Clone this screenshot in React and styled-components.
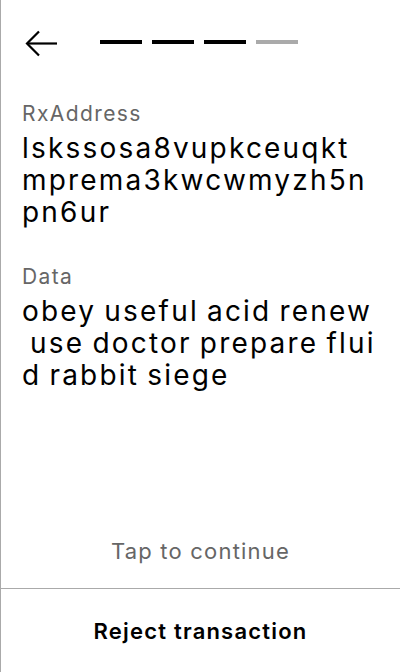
import styled, { createGlobalStyle } from "styled-components";

const GlobalStyle = createGlobalStyle`
  body {
    margin: 0;
    background: #fff;
    font-family: Inter, "Noto Sans", sans-serif;
  }
`

const Screen = styled.div`
  width: 400px;
  height: 672px;
  box-sizing: border-box;
  border-left: 1px solid #aaa;
  display: flex;
  flex-direction: column;
  background: #fff;
`

const Header = styled.div`
  display: flex;
  align-items: center;
  padding: 30px 0 0 24px;
  height: 28px;
  gap: 42px;
`

const BackButton = styled.button`
  border: none;
  background: none;
  padding: 0;
  width: 33px;
  height: 28px;
  cursor: pointer;
  display: flex;
`

const Steps = styled.div`
  display: flex;
  gap: 10px;
  margin-top: -4px;
`

const Step = styled.div`
  width: 42px;
  height: 4px;
  background: ${(p) => (p.$done ? "#000" : "#aaa")};
`

const Content = styled.div`
  flex: 1;
  padding: 43px 24px 0 21px;
`

const Field = styled.div`
  margin-bottom: 36px;
`

const Label = styled.div`
  font-size: 21px;
  letter-spacing: 1.4px;
  color: #666;
  margin-bottom: 6px;
`

const Value = styled.div`
  font-size: 28px;
  line-height: 32px;
  letter-spacing: 2.2px;
  word-spacing: -2px;
  color: #000;
  white-space: break-spaces;
  line-break: anywhere;
`

const TapHint = styled.div`
  text-align: center;
  font-size: 22px;
  letter-spacing: 1.2px;
  color: #666;
  margin-bottom: 24px;
`

const RejectButton = styled.button`
  border: none;
  border-top: 1px solid #aaa;
  background: none;
  height: 84px;
  width: 100%;
  font-family: inherit;
  font-size: 22px;
  font-weight: 600;
  letter-spacing: 1.2px;
  color: #000;
  cursor: pointer;
`

const steps = [true, true, true, false];

const App = () => {
  return (
    <Screen>
      <GlobalStyle />
      <Header>
        <BackButton aria-label="Back">
          <svg width="33" height="28" viewBox="0 0 33 28" fill="none" stroke="#000" strokeWidth="2.2">
            <path d="M2 13.5 H32" />
            <path d="M14 1.5 L2 13.5 L14 25.5" />
          </svg>
        </BackButton>
        <Steps>
          {steps.map((done, i) => (
            <Step key={i} $done={done} />
          ))}
        </Steps>
      </Header>

      <Content>
        <Field>
          <Label>RxAddress</Label>
          <Value>lskssosa8vupkceuqktmprema3kwcwmyzh5npn6ur</Value>
        </Field>
        <Field>
          <Label>Data</Label>
          <Value>obey useful acid renew use doctor prepare fluid rabbit siege</Value>
        </Field>
      </Content>

      <TapHint>Tap to continue</TapHint>
      <RejectButton>Reject transaction</RejectButton>
    </Screen>
  );
}

export default App;
